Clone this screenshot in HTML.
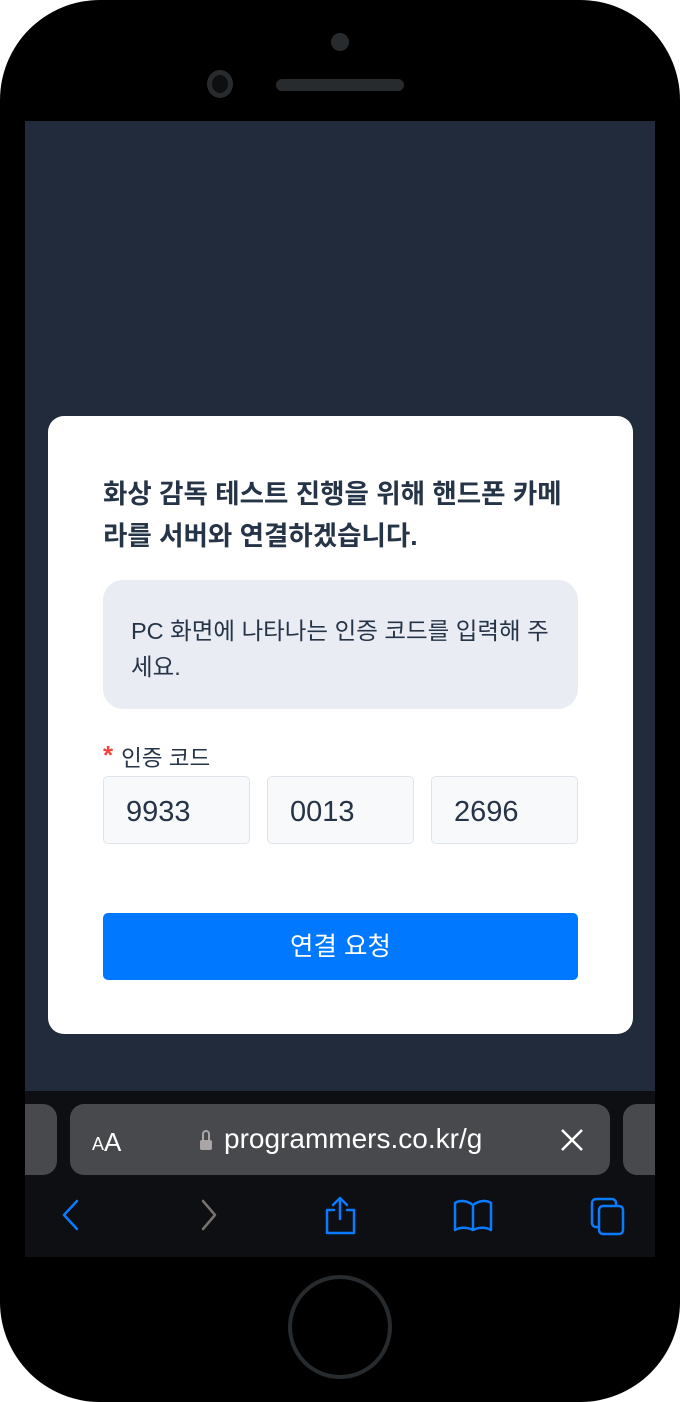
<!DOCTYPE html>
<html><head><meta charset="utf-8"><style>
*{margin:0;padding:0;box-sizing:border-box}
body{width:680px;height:1402px;background:#fff;position:relative;overflow:hidden;font-family:"Liberation Sans","Noto Sans CJK KR",sans-serif}
.phone{position:absolute;left:0;top:0;width:680px;height:1402px;background:#000;border-radius:100px}
.abs{position:absolute}
.screen{left:25px;top:121px;width:630px;height:970px;background:#212b3c}
.card{left:48px;top:416px;width:585px;height:618px;background:#fff;border-radius:16px}
.title{left:103px;top:473px;width:500px;font-size:26.5px;font-weight:bold;color:#263447;line-height:42px;white-space:nowrap}
.info{left:103px;top:580px;width:475px;height:129px;background:#e9ecf3;border-radius:20px;padding:33px 0 0 28px;font-size:23.5px;color:#263447;line-height:36px;white-space:nowrap}
.label{left:103px;top:741px;font-size:22.5px;color:#263447}
.label b{color:#f0463c;font-size:26px;margin-right:8px;position:relative;top:-2px}
.inp{top:776px;width:147px;height:68px;background:#f8f9fb;border:1px solid #e0e4ea;border-radius:5px;font-size:29px;color:#263447;padding-left:22px;line-height:70px}
.btn{left:103px;top:913px;width:475px;height:67px;background:#0078ff;border-radius:5px;color:#fff;font-size:25.5px;text-align:center;line-height:69px}
.bar{left:25px;top:1091px;width:630px;height:166px;background:#0d0f13}
.url{left:70px;top:1104px;width:540px;height:71px;background:#48494d;border-radius:14px;color:#fff}
</style></head><body>
<div class="phone"></div>
<div class="abs" style="left:331px;top:33px;width:18px;height:18px;border-radius:50%;background:#272b2e"></div>
<div class="abs" style="left:207px;top:70px;width:26px;height:28px;border-radius:50%;background:#272b2e"><div class="abs" style="left:5px;top:5px;width:16px;height:18px;border-radius:50%;background:#0d0f10"></div></div>
<div class="abs" style="left:276px;top:79px;width:128px;height:12px;border-radius:6px;background:#272b2e"></div>
<div class="abs screen"></div>
<div class="abs card"></div>
<div class="abs title">화상 감독 테스트 진행을 위해 핸드폰 카메<br>라를 서버와 연결하겠습니다.</div>
<div class="abs info">PC 화면에 나타나는 인증 코드를 입력해 주<br>세요.</div>
<div class="abs label"><b>*</b>인증 코드</div>
<div class="abs inp" style="left:103px">9933</div>
<div class="abs inp" style="left:267px">0013</div>
<div class="abs inp" style="left:431px">2696</div>
<div class="abs btn">연결 요청</div>
<div class="abs bar"></div>
<div class="abs" style="left:25px;top:1104px;width:32px;height:71px;background:#48494d;border-radius:0 14px 14px 0"></div>
<div class="abs" style="left:623px;top:1104px;width:32px;height:71px;background:#48494d;border-radius:14px 0 0 14px"></div>
<div class="abs url">
<div class="abs" style="left:22px;top:22px;font-size:18px">A<span style="font-size:26px;position:relative;top:1px">A</span></div>
<div class="abs" style="left:130px;top:30px;width:12px;height:10px;background:#aaa6a8;border-radius:2px;margin-top:6px"></div>
<div class="abs" style="left:132px;top:26px;width:8px;height:12px;border:2px solid #aaa6a8;border-radius:4px 4px 0 0"></div>
<div class="abs" style="left:154px;top:19px;font-size:28px">programmers.co.kr/g</div>
<svg class="abs" style="left:490px;top:24px" width="24" height="24"><path d="M2 2L22 22M22 2L2 22" stroke="#fff" stroke-width="2.5"/></svg>
</div>
<svg class="abs" style="left:55px;top:1195px" width="300" height="45" fill="none" stroke-width="2.5" stroke-linecap="round" stroke-linejoin="round">
<path d="M22 6L9 20L22 34" stroke="#0a7aff"/>
<path d="M148 6L160 20L148 34" stroke="#77736f"/>
</svg>
<svg class="abs" style="left:320px;top:1195px" width="320" height="45" fill="none" stroke="#0a7aff" stroke-width="2.5" stroke-linecap="round" stroke-linejoin="round">
<path d="M20 3V24M13 10L20 3L27 10"/>
<path d="M14 15H7V38H34V15H27"/>
<path d="M153 10C146 5 139 5 135 8V35C140 32 147 32 153 35C159 32 166 32 171 35V8C167 5 160 5 153 10V35"/>
<rect x="272" y="4" width="24" height="28" rx="4"/>
<rect x="279" y="11" width="24" height="28" rx="4" fill="#0d0f13"/>
</svg>
<div class="abs" style="left:288px;top:1275px;width:104px;height:104px;border-radius:50%;border:4px solid #272b2e"></div>
</body></html>
